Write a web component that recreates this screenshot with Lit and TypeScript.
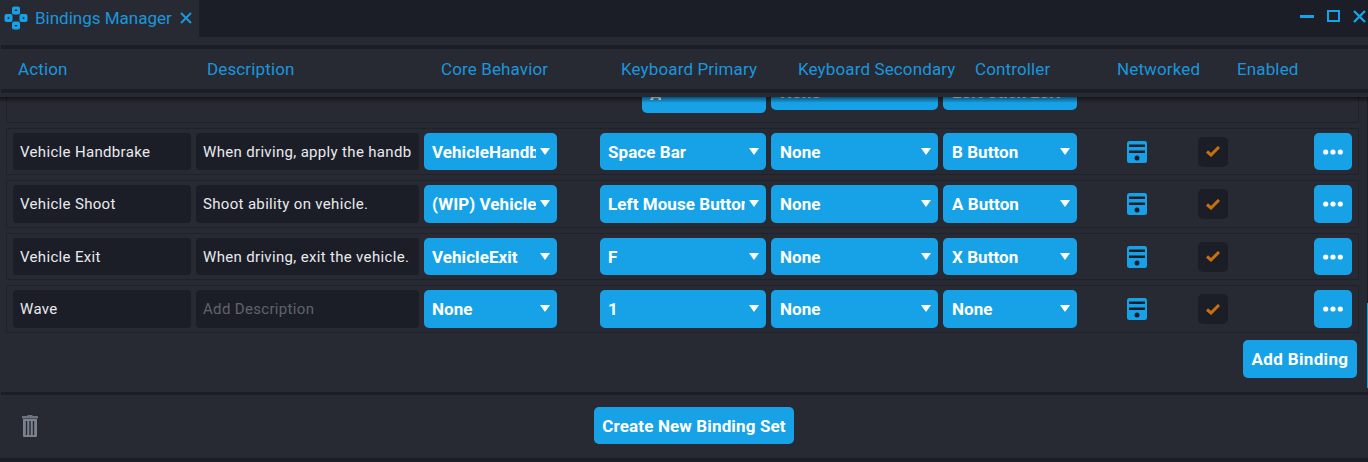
import { LitElement, html, css, svg } from "lit";
import { customElement } from "lit/decorators.js";

const rows = [
  ["Vehicle Handbrake", "When driving, apply the handbrake.", "VehicleHandbrake", "Space Bar", "None", "B Button"],
  ["Vehicle Shoot", "Shoot ability on vehicle.", "(WIP) VehicleShoot", "Left Mouse Button", "None", "A Button"],
  ["Vehicle Exit", "When driving, exit the vehicle.", "VehicleExit", "F", "None", "X Button"],
  ["Wave", "", "None", "1", "None", "None"],
];
const heads = [
  ["Action", 189], ["Description", 234], ["Core Behavior", 180], ["Keyboard Primary", 177],
  ["Keyboard Secondary", 177], ["Controller", 142], ["Networked", 120], ["Enabled", 60],
] as const;

const padIcon = svg`<svg class="logo" viewBox="0 0 24 24" width="24" height="24">
  <g fill="#17a2e8">
    <rect x="8" y="0.5" width="8" height="8" rx="2"/><rect x="8" y="15.5" width="8" height="8" rx="2"/>
    <rect x="0.5" y="8" width="8" height="8" rx="2"/><rect x="15.5" y="8" width="8" height="8" rx="2"/>
  </g>
  <g fill="#1b1e27">
    <path d="M12 3l1.6 2h-3.2z"/><path d="M12 21l1.6-2h-3.2z"/><path d="M3.2 12l2-1.6v3.2z"/><path d="M20.8 12l-2-1.6v3.2z"/>
  </g>
</svg>`;

@customElement("app-root")
export class AppRoot extends LitElement {
  static styles = css`
    :host { display: block; width: 1368px; height: 462px; overflow: hidden; background: #272a33; font-family: Roboto, "Liberation Sans", sans-serif; position: relative; }
    .top { height: 37px; background: #1b1e27; display: flex; align-items: stretch; justify-content: space-between; }
    .tab { width: 199px; background: #272a33; display: flex; align-items: center; color: #1b96dc; font-size: 17px; box-sizing: border-box; padding-left: 4px; }
    .logo { flex: none; margin-top: -1px; }
    .tabtitle { margin-left: 7px; margin-top: -1px; white-space: nowrap; }
    .tabx { margin-left: 8px; margin-top: -1px; flex: none; }
    .win { display: flex; align-items: flex-start; padding: 10px 2px 0 0; gap: 13px; }
    .band { height: 8px; }
    .band2 { height: 4px; }
    .dark { height: 4px; background: #1b1e27; margin-left: 1px; }
    .head { height: 40px; display: flex; align-items: center; padding-left: 18px; color: #1b96dc; font-size: 17px; letter-spacing: 0.13px; }
    .head span { flex: none; white-space: nowrap; }
    .list { height: 295px; overflow: hidden; position: relative; }
    .list::before { content: ""; position: absolute; left: 0; right: 0; top: 0; height: 6px; background: linear-gradient(#00000080, #00000000); z-index: 1; }
    .rows { margin: -24px 0 0 6px; width: 1353px; display: flex; flex-direction: column; gap: 4.95px; }
    .row { height: 47.5px; box-sizing: border-box; border: 1px solid #1f222b; padding: 4px 0 4px 6px; display: flex; gap: 5px; align-items: stretch; }
    .partial { height: 50px; align-items: flex-end; }
    .field { background: #1b1e27; border-radius: 4px; color: #e8eaee; font-size: 15px; letter-spacing: 0.33px; display: flex; align-items: center; padding: 0 7px; box-sizing: border-box; white-space: nowrap; flex: none; }
    .field span { overflow: hidden; flex: 1; min-width: 0; }
    .action { width: 178px; }
    .desc { width: 223px; }
    .ph { color: #5f636d; }
    .sel { background: #17a2e8; border-radius: 5px; color: #fff; font-size: 17px; font-weight: 700; letter-spacing: 0.06px; display: flex; align-items: center; padding-left: 8px; box-sizing: border-box; position: relative; white-space: nowrap; flex: none; height: 37.5px; }
    .sel b { overflow: hidden; font-weight: 700; flex: none; }
    .sel::after { content: ""; position: absolute; right: 7px; top: 50%; margin-top: -4px; border: 5px solid transparent; border-top: 7px solid #fff; border-bottom: 0; }
    .core { width: 133px; }
    .prim { width: 166px; margin-left: 38px; }
    .sec { width: 167px; padding-left: 9px; }
    .ctrl { width: 134px; padding-left: 9px; }
    .prim-p { width: 124px; margin-left: 629px; margin-bottom: 5px; }
    .low { margin-bottom: 8px; padding-top: 2px; }
    .net { margin-left: 45px; align-self: center; flex: none; }
    .check { margin-left: 46px; width: 30px; height: 30px; background: #1b1e27; border-radius: 5px; align-self: center; display: flex; align-items: center; justify-content: center; flex: none; }
    .more { margin-left: 81px; width: 38px; height: 37.5px; background: #17a2e8; border-radius: 5px; display: flex; align-items: center; justify-content: center; flex: none; }
    .addrow { display: flex; justify-content: flex-end; padding: 7.3px 11px 0 0; }
    .btn { background: #17a2e8; border-radius: 5px; color: #fff; font-size: 17px; font-weight: 700; display: flex; align-items: center; justify-content: center; height: 38px; white-space: nowrap; }
    .add { width: 114px; letter-spacing: 0.35px; }
    .fdark { height: 3px; background: #1b1e27; margin-left: 1px; }
    .foot { height: 63px; display: flex; align-items: center; position: relative; box-sizing: border-box; }
    .create { width: 200px; height: 37px; margin-left: 594px; margin-top: -2px; letter-spacing: 0.14px; }
    .trash { position: absolute; left: 22px; top: 19px; }
    .bottom { height: 4px; background: #1b1e27; }
    .scroll { position: absolute; right: 0; top: 303px; width: 1px; height: 85px; background: #17a2e8; }
    .track { position: absolute; right: 0; top: 97px; width: 1px; height: 291px; background: #1b1e27; }
  `;

  private netIcon() {
    return html`<svg class="net" width="20" height="22" viewBox="0 0 20 22">
      <rect width="20" height="22" rx="2.5" fill="#17a2e8"/>
      <rect x="2" y="3.5" width="16" height="2.5" fill="#1b1e27"/>
      <rect x="2" y="9.5" width="16" height="2.5" fill="#1b1e27"/>
      <circle cx="10" cy="17" r="2.5" fill="#1b1e27"/>
    </svg>`;
  }

  private row(r: string[]) {
    return html`<div class="row">
      <div class="field action"><span>${r[0]}</span></div>
      <div class="field desc ${r[1] ? "" : "ph"}"><span>${r[1] || "Add Description"}</span></div>
      ${this.sel(r[2], "core", 104)}
      ${this.sel(r[3], "prim", 137)}
      ${this.sel(r[4], "sec", 140)}
      ${this.sel(r[5], "ctrl", 110)}
      ${this.netIcon()}
      <div class="check"><svg width="14" height="11" viewBox="0 0 14 11"><path d="M1 5.5l4 3.5 8-8" fill="none" stroke="#c8700f" stroke-width="3"/></svg></div>
      <div class="more"><svg width="20" height="6" viewBox="0 0 20 6"><circle cx="2.7" cy="3" r="2.6" fill="#fff"/><circle cx="10" cy="3" r="2.6" fill="#fff"/><circle cx="17.3" cy="3" r="2.6" fill="#fff"/></svg></div>
    </div>`;
  }

  private sel(t: string, cls: string, w: number) {
    return html`<div class="sel ${cls}"><b style="width:${w}px">${t}</b></div>`;
  }

  render() {
    return html`
      <div class="top">
        <div class="tab">${padIcon}<span class="tabtitle">Bindings Manager</span>
          <svg class="tabx" width="12" height="12" viewBox="0 0 12 12"><path d="M1 1l10 10M11 1L1 11" stroke="#1b96dc" stroke-width="2"/></svg>
        </div>
        <div class="win">
          <svg width="14" height="11" viewBox="0 0 14 11"><rect y="5" width="14" height="3" fill="#17a2e8"/></svg>
          <svg width="13" height="12" viewBox="0 0 13 12"><rect x="1" y="1" width="11" height="10" fill="none" stroke="#17a2e8" stroke-width="2"/></svg>
          <svg width="13" height="13" viewBox="0 0 13 13"><path d="M1 1l11 11M12 1L1 12" stroke="#17a2e8" stroke-width="2.4"/></svg>
        </div>
      </div>
      <div class="band"></div>
      <div class="dark"></div>
      <div class="head">${heads.map(([t, w]) => html`<span style="width:${w}px">${t}</span>`)}</div>
      <div class="dark"></div>
      <div class="band2"></div>
      <div class="list">
        <div class="rows">
          <div class="row partial">
            <div class="sel prim-p"><b>A</b></div>
            <div class="sel sec low"><b>None</b></div>
            <div class="sel ctrl low"><b>Left Stick Left</b></div>
          </div>
          ${rows.map((r) => this.row(r))}
        </div>
        <div class="addrow"><div class="btn add">Add Binding</div></div>
      </div>
      <div class="fdark"></div>
      <div class="foot">
        <svg class="trash" width="16" height="23" viewBox="0 0 16 23">
          <path d="M5.5 2V1h5v1z" fill="#6d7480"/>
          <rect y="2" width="16" height="2.5" rx="0.5" fill="#6d7480"/>
          <path d="M1 5h14v17a1 1 0 0 1-1 1H2a1 1 0 0 1-1-1z" fill="#7b828e"/>
          <path d="M4.5 7v14M8 7v14M11.5 7v14" stroke="#272a33" stroke-width="1.4"/>
        </svg>
        <div class="btn create">Create New Binding Set</div>
      </div>
      <div class="bottom"></div>
      <div class="track"></div>
      <div class="scroll"></div>
    `;
  }
}
